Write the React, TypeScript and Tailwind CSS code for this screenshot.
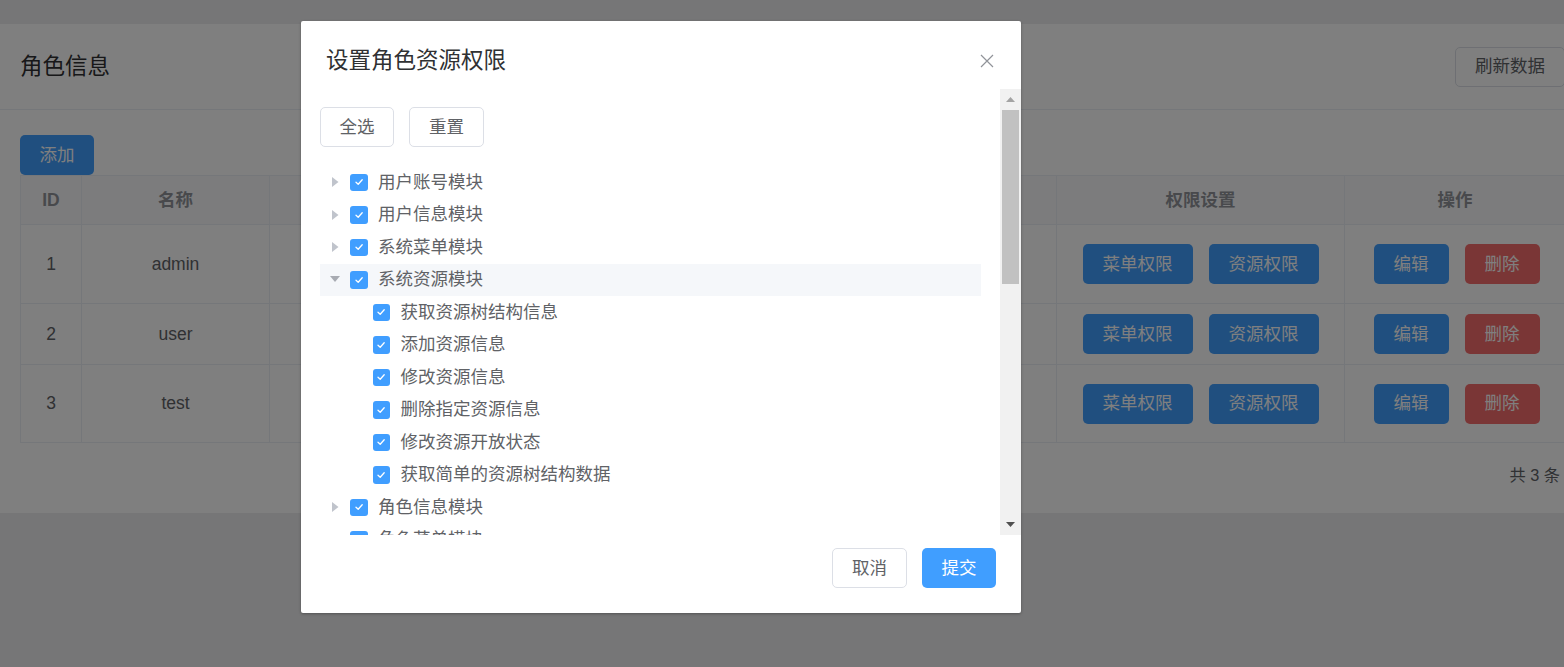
import React from "react";

type Node = { label: string; open?: boolean; children?: string[] };

const tree: Node[] = [
  { label: "用户账号模块" },
  { label: "用户信息模块" },
  { label: "系统菜单模块" },
  {
    label: "系统资源模块",
    open: true,
    children: [
      "获取资源树结构信息",
      "添加资源信息",
      "修改资源信息",
      "删除指定资源信息",
      "修改资源开放状态",
      "获取简单的资源树结构数据",
    ],
  },
  { label: "角色信息模块" },
  { label: "角色菜单模块" },
];

const rows = [
  { id: 1, name: "admin", h: "h-[79px]" },
  { id: 2, name: "user", h: "h-[61px]" },
  { id: 3, name: "test", h: "h-[78px]" },
];

const Check = () => (
  <span className="w-[17.5px] h-[17.5px] rounded-[3px] bg-[#409eff] flex items-center justify-center shrink-0">
    <svg width="12" height="12" viewBox="0 0 12 12" fill="none">
      <path d="M3 6.2 5.2 8.3 9.2 3.8" stroke="white" strokeWidth="1.3" strokeLinecap="round" strokeLinejoin="round" />
    </svg>
  </span>
);

const Caret = ({ open }: { open?: boolean }) => (
  <span className="w-[15px] h-[15px] flex items-center justify-center shrink-0">
    {open ? (
      <svg width="10" height="7" viewBox="0 0 10 7">
        <polygon points="0,0 10,0 5,6" fill="#a8abb2" />
      </svg>
    ) : (
      <svg width="7" height="10" viewBox="0 0 7 10">
        <polygon points="0,0 6.5,5 0,10" fill="#c0c4cc" />
      </svg>
    )}
  </span>
);

const TableButton = ({ text, red }: { text: string; red?: boolean }) => (
  <span
    className={`h-[40px] px-[20px] rounded-[5px] flex items-center text-[17.5px] text-white ${
      red ? "bg-[#f56c6c]" : "bg-[#409eff]"
    }`}
  >
    {text}
  </span>
);

export default function App() {
  return (
    <div className="relative w-[1564px] h-[667px] overflow-hidden bg-[#ececef] font-['Liberation_Sans','Noto_Sans_CJK_SC',sans-serif]">
      {/* page behind the dialog */}
      <div className="w-[1585px] pt-[24px]">
        <div className="bg-white h-[489px]">
          <div className="h-[86px] px-[20px] flex items-center justify-between border-b border-[#ebeef5]">
            <span className="text-[22.5px] leading-[30px] text-[#303133]">角色信息</span>
            <span className="h-[40px] px-[19px] flex items-center border border-[#dcdfe6] rounded-[5px] text-[17.5px] text-[#606266]">
              刷新数据
            </span>
          </div>
          <div className="px-[20px] pt-[25px]">
            <span className="inline-flex h-[40px] w-[74px] items-center justify-center rounded-[5px] bg-[#409eff] text-white text-[17.5px]">
              添加
            </span>
            <table className="w-[1545px] border-collapse table-fixed text-[17.5px] text-[#606266]">
              <colgroup>
                <col className="w-[61px]" />
                <col className="w-[188px]" />
                <col className="w-[787px]" />
                <col className="w-[288px]" />
                <col className="w-[221px]" />
              </colgroup>
              <thead>
                <tr className="h-[49px] bg-[#f8f9fb] text-[#909399] font-bold">
                  <th className="border border-[#ebeef5]">ID</th>
                  <th className="border border-[#ebeef5]">名称</th>
                  <th className="border border-[#ebeef5]">描述</th>
                  <th className="border border-[#ebeef5]">权限设置</th>
                  <th className="border border-[#ebeef5]">操作</th>
                </tr>
              </thead>
              <tbody>
                {rows.map((r) => (
                  <tr key={r.id} className={r.h}>
                    <td className="border border-[#ebeef5] text-center">{r.id}</td>
                    <td className="border border-[#ebeef5] text-center">{r.name}</td>
                    <td className="border border-[#ebeef5] text-center">{r.name} 角色</td>
                    <td className="border border-[#ebeef5]">
                      <div className="flex justify-center gap-[16px]">
                        <TableButton text="菜单权限" />
                        <TableButton text="资源权限" />
                      </div>
                    </td>
                    <td className="border border-[#ebeef5]">
                      <div className="flex justify-center gap-[16px] pl-[3px]">
                        <TableButton text="编辑" />
                        <TableButton text="删除" red />
                      </div>
                    </td>
                  </tr>
                ))}
              </tbody>
            </table>
            <div className="h-[64px] flex items-center justify-end pr-[5px] text-[16.25px] text-[#606266]">
              共 3 条
            </div>
          </div>
        </div>
      </div>

      {/* mask */}
      <div className="absolute inset-0 bg-black/50" />

      {/* dialog */}
      <div className="absolute left-[301px] top-[21px] w-[720px] h-[592px] bg-white rounded-[2px] shadow-[0_1px_3px_rgba(0,0,0,0.3)] flex flex-col">
        <div className="h-[68px] pl-[25px] pr-[27px] pt-[25px] flex items-start justify-between">
          <span className="text-[22.5px] leading-[30px] text-[#303133]">设置角色资源权限</span>
          <svg width="14" height="14" viewBox="0 0 14 14" className="mt-[8px]">
            <path d="M1 1 13 13M13 1 1 13" stroke="#909399" strokeWidth="1.2" />
          </svg>
        </div>

        <div className="h-[446px] flex">
          <div className="flex-1 overflow-hidden px-[19px] pt-[18px]">
            <div className="flex gap-[15px]">
              <span className="h-[40px] w-[74px] flex items-center justify-center border border-[#dcdfe6] rounded-[5px] text-[17.5px] text-[#606266]">
                全选
              </span>
              <span className="h-[40px] w-[75px] flex items-center justify-center border border-[#dcdfe6] rounded-[5px] text-[17.5px] text-[#606266]">
                重置
              </span>
            </div>
            <div className="mt-[19px] text-[17.5px] text-[#606266]">
              {tree.map((n) => (
                <div key={n.label}>
                  <div className={`h-[32.5px] flex items-center pl-[7.5px] ${n.open ? "bg-[#f5f7fa]" : ""}`}>
                    <Caret open={n.open} />
                    <span className="ml-[7.5px]">
                      <Check />
                    </span>
                    <span className="ml-[10.5px] leading-[31px]">{n.label}</span>
                  </div>
                  {n.open &&
                    n.children?.map((c) => (
                      <div key={c} className="h-[32.5px] flex items-center pl-[52.5px]">
                        <Check />
                        <span className="ml-[10.5px] leading-[31px]">{c}</span>
                      </div>
                    ))}
                </div>
              ))}
            </div>
          </div>

          {/* scrollbar */}
          <div className="w-[21px] bg-[#f1f1f1] flex flex-col">
            <div className="h-[21px] flex items-center justify-center">
              <svg width="9" height="5" viewBox="0 0 9 5">
                <polygon points="4.5,0 9,5 0,5" fill="#a3a3a3" />
              </svg>
            </div>
            <div className="flex-1 px-[2px]">
              <div className="h-[174px] bg-[#c1c1c1]" />
            </div>
            <div className="h-[21px] flex items-center justify-center">
              <svg width="9" height="5" viewBox="0 0 9 5">
                <polygon points="0,0 9,0 4.5,5" fill="#505050" />
              </svg>
            </div>
          </div>
        </div>

        <div className="flex justify-end gap-[15px] pt-[13px] pr-[25px]">
          <span className="h-[40px] w-[75px] flex items-center justify-center border border-[#dcdfe6] rounded-[5px] text-[17.5px] text-[#606266]">
            取消
          </span>
          <span className="h-[40px] w-[74px] flex items-center justify-center rounded-[5px] bg-[#409eff] text-[17.5px] text-white">
            提交
          </span>
        </div>
      </div>
    </div>
  );
}
